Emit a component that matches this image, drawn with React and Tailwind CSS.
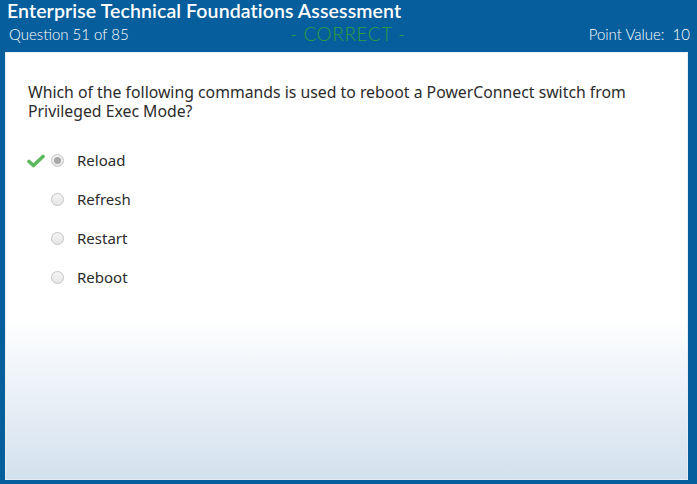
import React from "react";

const options = ["Reload", "Refresh", "Restart", "Reboot"];

function Check() {
  return (
    <svg width="18" height="14" viewBox="0 0 18 14">
      <path d="M2 7.5 L6.5 11.5 L16 2.5" fill="none" stroke="#5cb85c" strokeWidth="3.6" strokeLinecap="round" strokeLinejoin="round" />
    </svg>
  );
}

function Radio({ selected }) {
  return (
    <div className="w-[13px] h-[13px] rounded-full border border-[#c4c4c4] bg-gradient-to-b from-[#f4f4f4] to-[#e6e6e6] flex items-center justify-center">
      {selected && <div className="w-[7px] h-[7px] rounded-full bg-[#a8a8a8]" />}
    </div>
  );
}

export default function App() {
  return (
    <div className="w-[697px] h-[484px] bg-[#065e9d] flex flex-col overflow-hidden" style={{ fontFamily: "Lato, 'Open Sans', sans-serif" }}>
      <div className="h-[52px] shrink-0 flex flex-col px-[7px]">
        <div className="text-white text-[19.5px] font-semibold leading-[22px] tracking-[0.1px]">
          Enterprise Technical Foundations Assessment
        </div>
        <div className="flex items-center h-[24px] text-white text-[15px] font-light">
          <div className="w-[283px] pl-[2px]">Question 51 of 85</div>
          <div className="text-[#2f9e3f] text-[19px] font-light tracking-[0.6px]">- CORRECT -</div>
          <div className="ml-auto">Point Value:&nbsp; 10</div>
        </div>
      </div>
      <div className="flex-1 ml-[5px] mr-[9px] mb-[4px] bg-gradient-to-b from-white from-[62%] to-[#d3e1ee] border border-[#e8eef5] flex flex-col" style={{ fontFamily: "'Noto Sans', 'Open Sans', sans-serif" }}>
        <div className="pl-[22px] pt-[30px] pr-[20px] text-[15.8px] leading-[19px] text-[#2b2b2b]">
          Which of the following commands is used to reboot a PowerConnect switch from Privileged Exec Mode?
        </div>
        <div className="flex flex-col mt-[20px]">
          {options.map((o, i) => (
            <div key={o} className="flex items-center h-[39px]">
              <div className="w-[45px] flex justify-end pr-[6px]">{i === 0 && <Check />}</div>
              <Radio selected={i === 0} />
              <div className="ml-[13px] text-[15px] text-[#2b2b2b]">{o}</div>
            </div>
          ))}
        </div>
      </div>
    </div>
  );
}
